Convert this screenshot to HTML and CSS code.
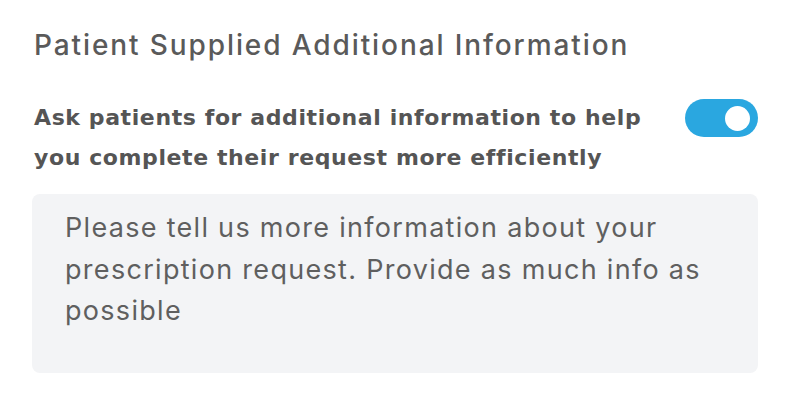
FILE: index.html
```html
<!DOCTYPE html>
<html>
<head>
<meta charset="utf-8">
<link rel="stylesheet" href="styles.css">
</head>
<body>
<section class="panel">
  <h2 class="title">Patient Supplied Additional Information</h2>
  <div class="row">
    <p class="label">Ask patients for additional information to help you complete their request more efficiently</p>
    <div class="toggle"><span class="knob"></span></div>
  </div>
  <div class="textbox">Please tell us more information about your prescription request. Provide as much info as possible</div>
</section>
</body>
</html>
```
FILE: styles.css
```css
html, body {
  margin: 0;
  padding: 0;
  background: #ffffff;
}
.panel {
  width: 726px;
  padding: 25px 0 0 32px;
  font-family: "Inter", "Noto Sans", sans-serif;
}
.title {
  margin: 0 0 0 2px;
  font-size: 28px;
  line-height: 40px;
  font-weight: 500;
  color: #5a5a5a;
  letter-spacing: 1.9px;
}
.row {
  display: flex;
  justify-content: space-between;
  align-items: flex-start;
  margin-top: 33px;
}
.label {
  margin: 0 0 0 2px;
  width: 630px;
  font-family: "DejaVu Sans", sans-serif;
  font-size: 22px;
  line-height: 40px;
  font-weight: 700;
  color: #555555;
  letter-spacing: 0.6px;
}
.toggle {
  margin-top: 1px;
  width: 73px;
  height: 38px;
  border-radius: 19px;
  background: #2aa7e0;
  display: flex;
  align-items: center;
  justify-content: flex-end;
  padding-right: 8px;
  box-sizing: border-box;
}
.knob {
  width: 25px;
  height: 25px;
  border-radius: 50%;
  background: #ffffff;
}
.textbox {
  margin-top: 16px;
  height: 179px;
  box-sizing: border-box;
  padding: 13px 40px 0 33px;
  background: #f3f4f6;
  border-radius: 8px;
  font-size: 27px;
  line-height: 41.5px;
  color: #5f5f5f;
  letter-spacing: 1.3px;
}
```
